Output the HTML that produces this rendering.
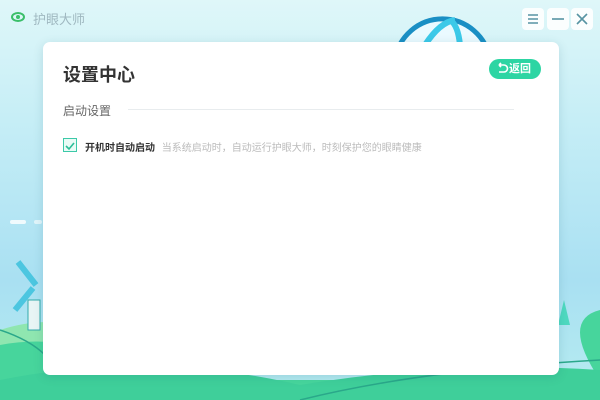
<!DOCTYPE html>
<html><head><meta charset="utf-8"><style>
*{margin:0;padding:0;box-sizing:border-box}
body{width:600px;height:400px;overflow:hidden;position:relative;font-family:"Liberation Sans","Noto Sans CJK SC",sans-serif;background:linear-gradient(180deg,#dff7f9 0%,#c6eef6 30%,#a9e0f2 70%,#b6ecf0 100%)}
.card{position:absolute;left:43px;top:42px;width:516px;height:333px;background:#fff;border-radius:7px;box-shadow:0 2px 10px rgba(0,80,100,.15)}
.btn{position:absolute;top:8px;width:22px;height:22px;background:#fff;border-radius:4px;opacity:.9}
</style></head><body>
<svg width="600" height="400" style="position:absolute;left:0;top:0">
<path d="M395 60 A48 48 0 0 1 490 60 Z" fill="#eafaff"/>
<path d="M395 60 A48 48 0 0 1 490 60" fill="none" stroke="#1a8fc4" stroke-width="5"/>
<path d="M425 45 Q440 22 455 20 M460 45 Q458 25 450 20" stroke="#3cc9e8" stroke-width="6" fill="none"/>
<path d="M0 330 Q60 310 120 340 L0 400Z" fill="#8fe6b0"/>
<path d="M0 345 Q80 330 150 380 L600 380 Q560 320 600 310 L600 400 L0 400Z" fill="#47d59c"/>
<path d="M0 380 Q150 350 300 385 Q450 360 600 370 L600 400 L0 400Z" fill="#3fcf9a"/>
<path d="M300 400 Q420 370 600 360" stroke="#2aa88a" stroke-width="1.5" fill="none"/>
<path d="M0 330 Q30 340 45 355" stroke="#2aa88a" stroke-width="1.5" fill="none"/>
<rect x="28" y="300" width="12" height="30" fill="#e8f5f5" stroke="#3aa" />
<path d="M18 262 L36 285 M15 310 L33 288" stroke="#4cc6e0" stroke-width="6"/>
<path d="M558 325 L564 300 L570 325Z" fill="#4fd9c0"/>
<rect x="10" y="220" width="16" height="4" rx="2" fill="#fff" opacity=".8"/>
<rect x="34" y="220" width="8" height="4" rx="2" fill="#fff" opacity=".6"/>
<ellipse cx="18" cy="17" rx="6" ry="4" fill="none" stroke="#3bbf6a" stroke-width="2"/>
<circle cx="18" cy="17" r="2" fill="#3bbf6a"/>
</svg>
<div style="position:absolute;left:33px;top:9px;font-size:13px;color:#9fb8c0">护眼大师</div>
<div class="btn" style="left:522px"><svg width="22" height="22"><path d="M6 7H16M6 11H16M6 15H16" stroke="#4a8a9a" stroke-width="1.6"/></svg></div>
<div class="btn" style="left:547px"><svg width="22" height="22"><path d="M5 11H17" stroke="#4a8a9a" stroke-width="1.6"/></svg></div>
<div class="btn" style="left:571px"><svg width="22" height="22"><path d="M6 6L16 16M16 6L6 16" stroke="#4a8a9a" stroke-width="1.6"/></svg></div>
<div class="card">
<div style="position:absolute;left:20px;top:19px;font-size:18px;font-weight:bold;color:#333">设置中心</div>
<div style="position:absolute;left:446px;top:17px;width:52px;height:20px;border-radius:10px;background:#2dd5a3;color:#fff;font-size:11px;line-height:20px;padding-left:20px;font-weight:bold">返回
<svg width="14" height="14" style="position:absolute;left:6px;top:3px"><path d="M4 3H9A3.5 3.5 0 0 1 9 10H4M4 3L6 1M4 3L6 5" stroke="#fff" stroke-width="1.6" fill="none"/></svg></div>
<div style="position:absolute;left:20px;top:60px;font-size:12px;color:#666">启动设置</div>
<div style="position:absolute;left:85px;top:67px;width:386px;height:1px;background:#e8ecee"></div>
<div style="position:absolute;left:20px;top:96px;width:14px;height:14px;border:1px solid #3cc9a8;background:#e9fbf6"><svg width="12" height="12"><path d="M2 6L5 9L10 3" stroke="#2bbd98" stroke-width="1.6" fill="none"/></svg></div>
<div style="position:absolute;left:42px;top:97px;font-size:10px;font-weight:bold;color:#333;white-space:nowrap">开机时自动启动 <span style="font-weight:normal;color:#bbb;margin-left:4px">当系统启动时，自动运行护眼大师，时刻保护您的眼睛健康</span></div>
</div>
</body></html>
